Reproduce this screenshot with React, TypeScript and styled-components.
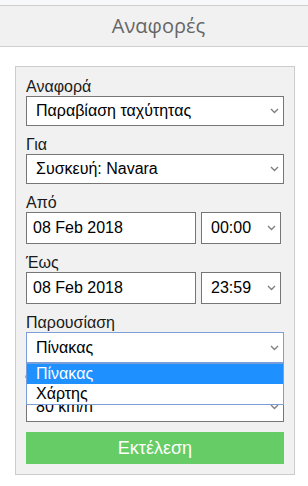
import React from 'react'
import styled, { createGlobalStyle } from 'styled-components'

const GlobalStyle = createGlobalStyle`
    html, body {
        margin: 0;
        padding: 0;
        background: #ffffff;
    }
    * {
        box-sizing: border-box;
    }
`

const Page = styled.div`
    width: 308px;
    height: 486px;
    overflow: hidden;
    background: #ffffff;
    font-family: 'Liberation Sans', Arial, sans-serif;
    font-size: 16px;
    color: #111;
`

const TopStrip = styled.div`
    height: 5px;
    background: #f7f8fa;
`

const Header = styled.div`
    height: 42px;
    border-top: 1px solid #cfcfcf;
    border-bottom: 1px solid #cfcfcf;
    background: #f1f1f1;
    color: #666;
    font-family: 'Open Sans', 'Noto Sans', sans-serif;
    font-size: 20px;
    line-height: 40px;
    text-align: center;
    padding-left: 9px;
`

const Panel = styled.div`
    width: 280px;
    margin: 19px 0 0 15px;
    border: 1px solid #cccccc;
    background: #f1f1f1;
    padding: 11px 10px 10px 10px;
    display: flex;
    flex-direction: column;
`

const Group = styled.div`
    display: flex;
    flex-direction: column;
    margin-bottom: 10px;
    position: relative;
`

const Label = styled.div`
    height: 18px;
    line-height: 18px;
    font-size: 16px;
    color: #1a1a1a;
`

const Row = styled.div`
    display: flex;
    gap: 5px;
`

const SelectBox = styled.div<{ $height: number; $width?: number; $focused?: boolean; $pad?: number }>`
    position: relative;
    width: ${(p) => (p.$width ? `${p.$width}px` : '100%')};
    height: ${(p) => p.$height}px;
    background: #ffffff;
    border: 1px solid ${(p) => (p.$focused ? '#7a9fd8' : '#767676')};
    padding-left: ${(p) => p.$pad ?? 9}px;
    display: flex;
    align-items: center;
    font-size: 16px;
    color: #000;
    white-space: nowrap;
`

const Chevron = styled.svg`
    position: absolute;
    right: 4px;
    top: 50%;
    margin-top: -3px;
`

const DateInput = styled.div`
    width: 170px;
    height: 32px;
    background: #ffffff;
    border: 1px solid #767676;
    padding-left: 6px;
    display: flex;
    align-items: center;
    font-size: 16px;
    color: #000;
`

const DropList = styled.div`
    position: absolute;
    left: 0;
    right: 0;
    top: 49px;
    z-index: 2;
    background: #ffffff;
    border: 1px solid #7a9fd8;
    display: flex;
    flex-direction: column;
`

const Option = styled.div<{ $active?: boolean }>`
    height: 20px;
    line-height: 20px;
    padding-left: 9px;
    font-size: 16px;
    background: ${(p) => (p.$active ? '#1e90ff' : '#ffffff')};
    color: ${(p) => (p.$active ? '#ffffff' : '#000000')};
`

const RunButton = styled.div`
    height: 32px;
    background: #66cc66;
    color: #ffffff;
    font-size: 18px;
    line-height: 32px;
    text-align: center;
`

function Arrow() {
    return (
        <Chevron width="9" height="6" viewBox="0 0 9 6">
            <path d="M1 1 L4.5 4.5 L8 1" fill="none" stroke="#808080" strokeWidth="1.4" />
        </Chevron>
    )
}

function Select({
    value,
    height,
    width,
    focused,
    pad,
}: {
    value: string
    height: number
    width?: number
    focused?: boolean
    pad?: number
}) {
    return (
        <SelectBox $height={height} $width={width} $focused={focused} $pad={pad}>
            {value}
            <Arrow />
        </SelectBox>
    )
}

export default function App() {
    return (
        <>
            <GlobalStyle />
            <Page>
                <TopStrip />
                <Header>Αναφορές</Header>
                <Panel>
                    <Group>
                        <Label>Αναφορά</Label>
                        <Select value="Παραβίαση ταχύτητας" height={30} />
                    </Group>
                    <Group>
                        <Label>Για</Label>
                        <Select value="Συσκευή: Navara" height={30} />
                    </Group>
                    <Group>
                        <Label>Από</Label>
                        <Row>
                            <DateInput>08 Feb 2018</DateInput>
                            <Select value="00:00" height={32} width={80} />
                        </Row>
                    </Group>
                    <Group>
                        <Label>Έως</Label>
                        <Row>
                            <DateInput>08 Feb 2018</DateInput>
                            <Select value="23:59" height={32} width={80} />
                        </Row>
                    </Group>
                    <Group>
                        <Label>Παρουσίαση</Label>
                        <Select value="Πίνακας" height={31} focused />
                        <DropList>
                            <Option $active>Πίνακας</Option>
                            <Option>Χάρτης</Option>
                        </DropList>
                    </Group>
                    <Group>
                        <Label>Όριο ταχύτητας</Label>
                        <Select value="80 km/h" height={31} />
                    </Group>
                    <RunButton>Εκτέλεση</RunButton>
                </Panel>
            </Page>
        </>
    )
}
